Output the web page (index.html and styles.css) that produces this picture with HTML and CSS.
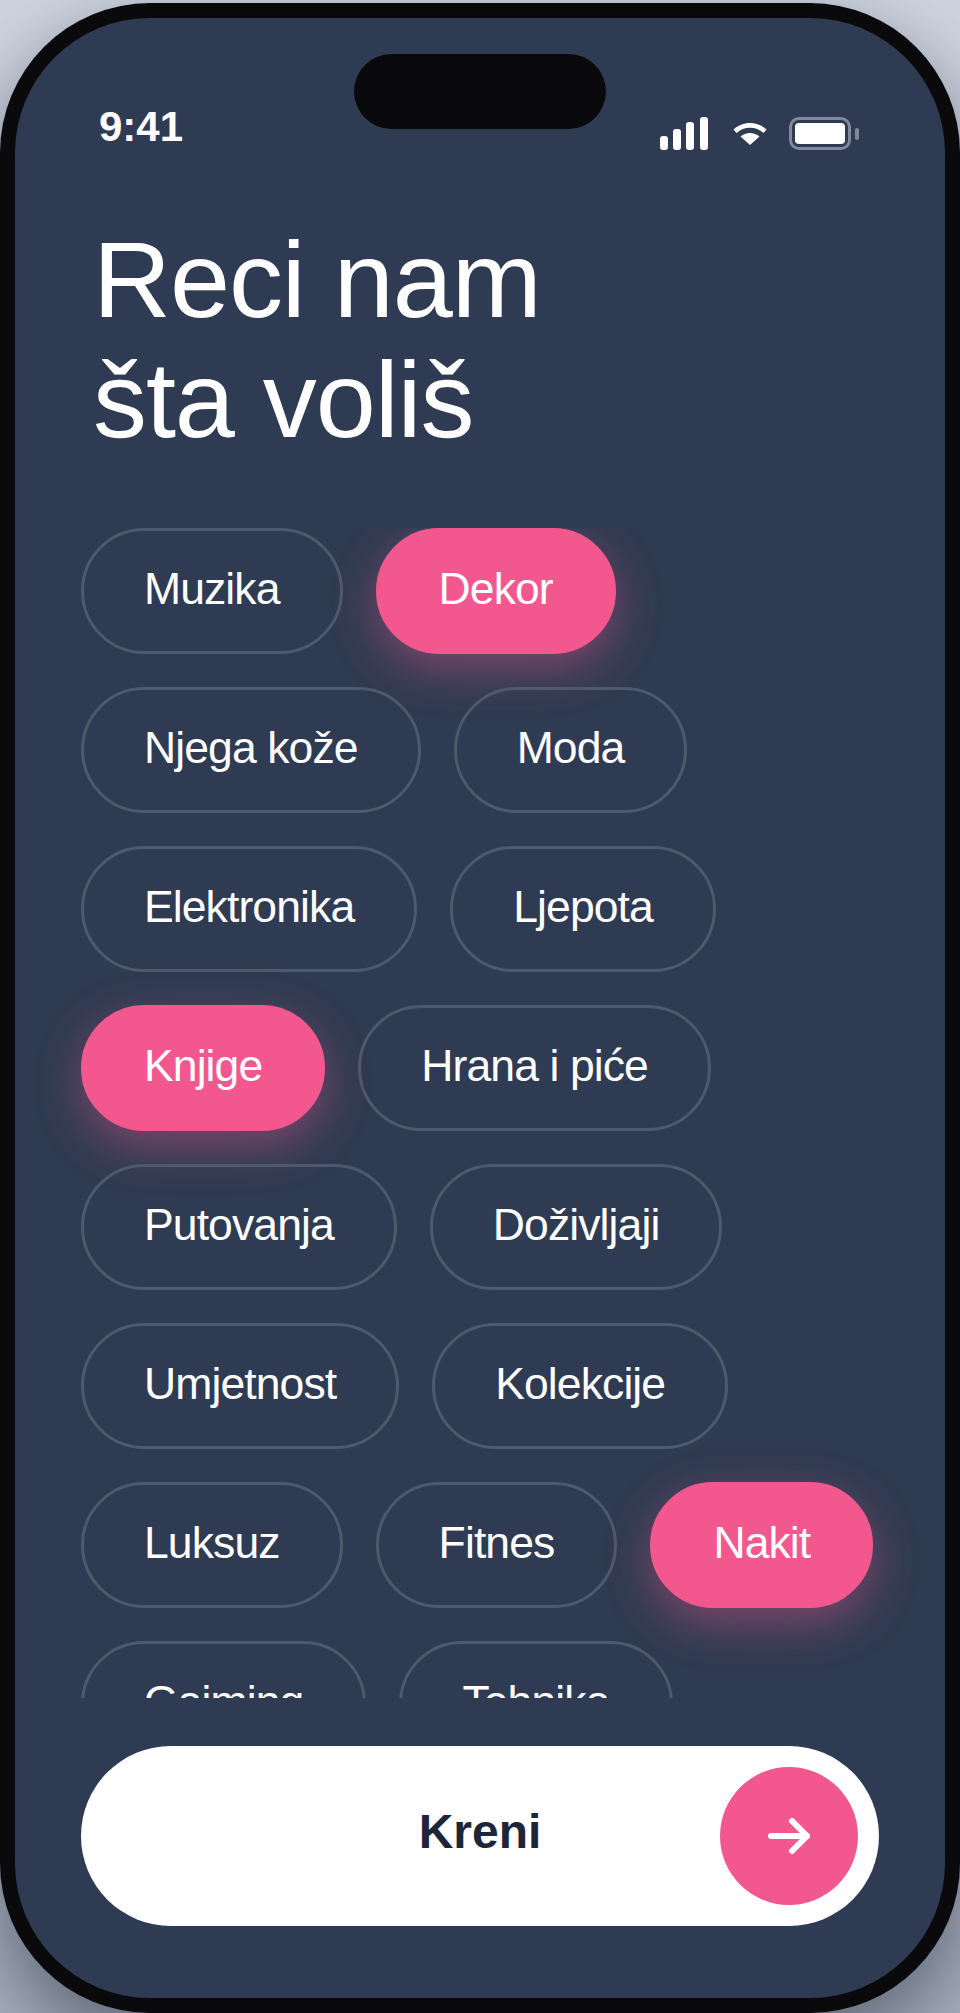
FILE: index.html
```html
<!DOCTYPE html>
<html lang="bs">
<head>
  <meta charset="UTF-8">
  <title>Reci nam šta voliš</title>
  <link rel="stylesheet" href="styles.css">
</head>
<body>

  <div class="phone">
    <div class="screen">
      <div class="island"></div>

      <div class="status-bar">
        <span class="time">9:41</span>
        <div class="status-icons">
          <svg class="icon-signal" width="48" height="33" viewBox="0 0 48 33" fill="#fff">
            <rect x="0" y="19" width="8" height="14" rx="3"/>
            <rect x="13" y="12" width="8" height="21" rx="3"/>
            <rect x="26" y="5" width="8" height="28" rx="3"/>
            <rect x="40" y="0" width="8" height="33" rx="3"/>
          </svg>
          <svg class="icon-wifi" width="34" height="22" viewBox="0 0 34 22" fill="#fff">
            <path d="M17 0C10.600 0 5 2.500 0.500 6.500L3.500 10C7.300 6.700 11.900 4.800 17 4.800S26.700 6.700 30.500 10L33.500 6.500C29 2.500 23.400 0 17 0Z"/>
            <path d="M17 10C13.400 10 10.200 11.300 7.500 13.500L17 22L26.500 13.500C23.800 11.300 20.600 10 17 10Z"/>
          </svg>
          <div class="battery">
            <div class="battery-body"><div class="battery-fill"></div></div>
            <div class="battery-nub"></div>
          </div>
        </div>
      </div>

      <h1>Reci nam<br>šta voliš</h1>

      <div class="chips-area">
        <div class="chips">
          <button class="chip">Muzika</button>
          <button class="chip chip-on">Dekor</button>
          <button class="chip">Njega kože</button>
          <button class="chip">Moda</button>
          <button class="chip">Elektronika</button>
          <button class="chip">Ljepota</button>
          <button class="chip chip-on">Knjige</button>
          <button class="chip">Hrana i piće</button>
          <button class="chip">Putovanja</button>
          <button class="chip">Doživljaji</button>
          <button class="chip">Umjetnost</button>
          <button class="chip">Kolekcije</button>
          <button class="chip">Luksuz</button>
          <button class="chip">Fitnes</button>
          <button class="chip chip-on">Nakit</button>
          <button class="chip">Gaiming</button>
          <button class="chip">Tehnika</button>
        </div>
      </div>

      <div class="footer">
        <button class="go-btn">
          <span class="go-label">Kreni</span>
          <span class="go-circle">
            <svg width="42" height="36" viewBox="0 0 42 36" fill="none" stroke="#fff" stroke-width="6" stroke-linecap="round" stroke-linejoin="round">
              <path d="M3 18H39"/>
              <path d="M24 3L39 18L24 33"/>
            </svg>
          </span>
        </button>
      </div>
    </div>
  </div>

</body>
</html>
```

FILE: styles.css
```css
* {
  box-sizing: border-box;
}

html,
body {
  margin: 0;
  height: 2013px;
  overflow: hidden;
}

body {
  font-family: "Liberation Sans", Arial, sans-serif;
  background: linear-gradient(180deg, #cfd5e0 0%, #a9b1c0 100%);
  padding-top: 3px;
}

.phone {
  width: 960px;
  height: 2010px;
  background: #0a0a0c;
  border-radius: 150px;
  padding: 15px;
  box-shadow: 0 30px 80px rgba(15, 23, 42, 0.5);
}

.screen {
  position: relative;
  display: flex;
  flex-direction: column;
  height: 100%;
  background: #2f3b52;
  border-radius: 135px;
  overflow: hidden;
}

.island {
  position: absolute;
  top: 36px;
  left: 339px;
  width: 252px;
  height: 75px;
  background: #0a0a0c;
  border-radius: 38px;
}

.status-bar {
  display: flex;
  justify-content: space-between;
  align-items: flex-start;
  padding: 85px 86px 0 84px;
  height: 165px;
  flex: none;
}

.time {
  color: #fff;
  font-size: 42px;
  font-weight: 700;
  line-height: 48px;
}

.status-icons {
  display: flex;
  align-items: center;
  gap: 25px;
  margin-top: 14px;
}

.battery {
  display: flex;
  align-items: center;
  gap: 4px;
  margin-left: -3px;
}

.battery-body {
  width: 62px;
  height: 33px;
  border: 3px solid #808a9a;
  border-radius: 10px;
  padding: 3px;
}

.battery-fill {
  height: 100%;
  background: #fff;
  border-radius: 4px;
}

.battery-nub {
  width: 4px;
  height: 12px;
  background: #808a9a;
  border-radius: 2px;
}

h1 {
  margin: 37px 0 68px;
  padding-left: 78px;
  color: #fff;
  font-size: 108px;
  font-weight: 400;
  line-height: 120px;
  letter-spacing: -1.08px;
  flex: none;
}

.chips-area {
  height: 1170px;
  overflow: hidden;
  flex: none;
}

.chips {
  display: flex;
  flex-wrap: wrap;
  gap: 33px;
  padding: 0 60px 0 66px;
}

.chip {
  height: 126px;
  padding: 0 60px 5px;
  font-family: inherit;
  font-size: 44.5px;
  letter-spacing: -0.9px;
  color: #fff;
  background: transparent;
  border: 3px solid #4e596c;
  border-radius: 63px;
}

.chip-on {
  background: #f2588e;
  border-color: #f2588e;
  box-shadow: 0 15px 45px rgba(242, 88, 142, 0.4);
}

.footer {
  padding: 48px 66px 0;
}

.go-btn {
  position: relative;
  display: flex;
  align-items: center;
  justify-content: center;
  width: 100%;
  height: 180px;
  padding: 0 0 10px;
  background: #fff;
  border: none;
  border-radius: 90px;
}

.go-label {
  color: #1c2638;
  font-family: inherit;
  font-size: 48px;
  font-weight: 700;
}

.go-circle {
  position: absolute;
  top: 21px;
  right: 21px;
  display: flex;
  align-items: center;
  justify-content: center;
  width: 138px;
  height: 138px;
  background: #f2588e;
  border-radius: 50%;
}
```
